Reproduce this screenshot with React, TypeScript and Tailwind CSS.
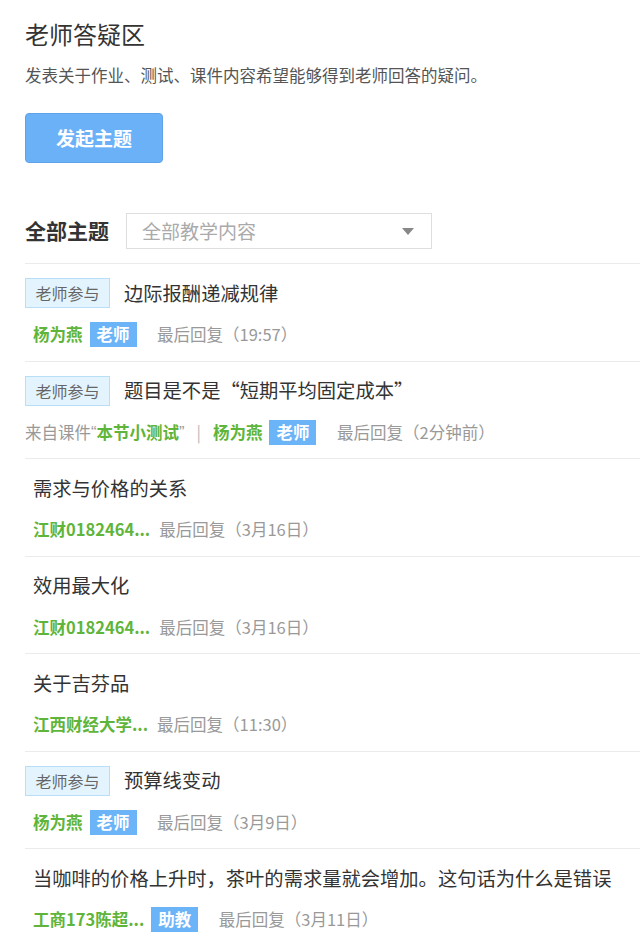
type Topic = {
  teacherJoined?: boolean;
  title: string;
  source?: string;
  name: string;
  role?: string;
  reply: string;
};

const topics: Topic[] = [
  { teacherJoined: true, title: "边际报酬递减规律", name: "杨为燕", role: "老师", reply: "最后回复（19:57）" },
  {
    teacherJoined: true,
    title: "题目是不是“短期平均固定成本”",
    source: "本节小测试",
    name: "杨为燕",
    role: "老师",
    reply: "最后回复（2分钟前）",
  },
  { title: "需求与价格的关系", name: "江财0182464...", reply: "最后回复（3月16日）" },
  { title: "效用最大化", name: "江财0182464...", reply: "最后回复（3月16日）" },
  { title: "关于吉芬品", name: "江西财经大学...", reply: "最后回复（11:30）" },
  { teacherJoined: true, title: "预算线变动", name: "杨为燕", role: "老师", reply: "最后回复（3月9日）" },
  {
    title: "当咖啡的价格上升时，茶叶的需求量就会增加。这句话为什么是错误",
    name: "工商173陈超...",
    role: "助教",
    reply: "最后回复（3月11日）",
  },
];

const TopicRow = ({ topic }: { topic: Topic }) => {
  return (
    <div className="border-t border-[#ebebeb] pt-[14px] pb-[13.5px]">
      <div className="flex h-[30px] items-center whitespace-nowrap overflow-hidden">
        {topic.teacherJoined ? (
          <span className="flex h-[30px] items-center border border-[#b9def8] bg-[#e4f4fe] px-[9.5px] text-[16px] text-[#666]">
            老师参与
          </span>
        ) : null}
        <span
          className={
            "text-[19.3px] text-[#333] " + (topic.teacherJoined ? "ml-[14px]" : "ml-[8px]")
          }
        >
          {topic.title}
        </span>
      </div>
      <div
        className={
          "mt-[14px] flex h-[25px] items-center whitespace-nowrap text-[16.5px] " +
          (topic.source ? "" : "pl-[8px]")
        }
      >
        {topic.source ? (
          <>
            <span className="text-[#999]">来自课件</span>
            <span className="font-['Liberation_Sans'] text-[#999]">“</span>
            <span className="font-bold text-[#5fb53a]">{topic.source}</span>
            <span className="font-['Liberation_Sans'] text-[#999]">”</span>
            <span className="mx-[12px] text-[#bbb]">|</span>
          </>
        ) : null}
        <span className="font-bold text-[#5fb53a]">{topic.name}</span>
        {topic.role ? (
          <span className="ml-[7px] mr-[7px] flex h-[25px] items-center bg-[#6cb4f8] px-[7px] font-bold text-white">
            {topic.role}
          </span>
        ) : null}
        <span className={"text-[#999] " + (topic.role ? "ml-[13.5px]" : "ml-[9px]")}>
          {topic.reply}
        </span>
      </div>
    </div>
  );
};

export default function App() {
  return (
    <div
      className="min-h-[936px] bg-white pt-[17px]"
      style={{ fontFamily: '"Noto Sans CJK SC", "Noto Sans", sans-serif' }}
    >
      <div className="pl-[25px]">
        <h1 className="text-[24px] leading-[34px] text-[#333]">老师答疑区</h1>
        <p className="mt-[11.5px] text-[16.5px] leading-[24px] text-[#555]">
          发表关于作业、测试、课件内容希望能够得到老师回答的疑问。
        </p>
        <button className="mt-[26.5px] flex h-[50px] w-[138px] items-center justify-center rounded-[4px] border border-[#5ea3ea] bg-[#6bb1f8] text-[19px] font-bold text-white">
          发起主题
        </button>
        <div className="mt-[50px] flex items-center">
          <span className="text-[21px] font-bold text-[#333]">全部主题</span>
          <div className="ml-[17px] flex h-[36px] w-[306px] items-center justify-between border border-[#dedede] pl-[15px] pr-[17px]">
            <span className="text-[19px] text-[#aaa]">全部教学内容</span>
            <span className="h-0 w-0 border-l-[6.5px] border-r-[6.5px] border-t-[7px] border-l-transparent border-r-transparent border-t-[#888]"></span>
          </div>
        </div>
      </div>
      <div className="ml-[25px] mt-[14px]">
        {topics.map((t, i) => (
          <TopicRow key={i} topic={t} />
        ))}
      </div>
    </div>
  );
}
